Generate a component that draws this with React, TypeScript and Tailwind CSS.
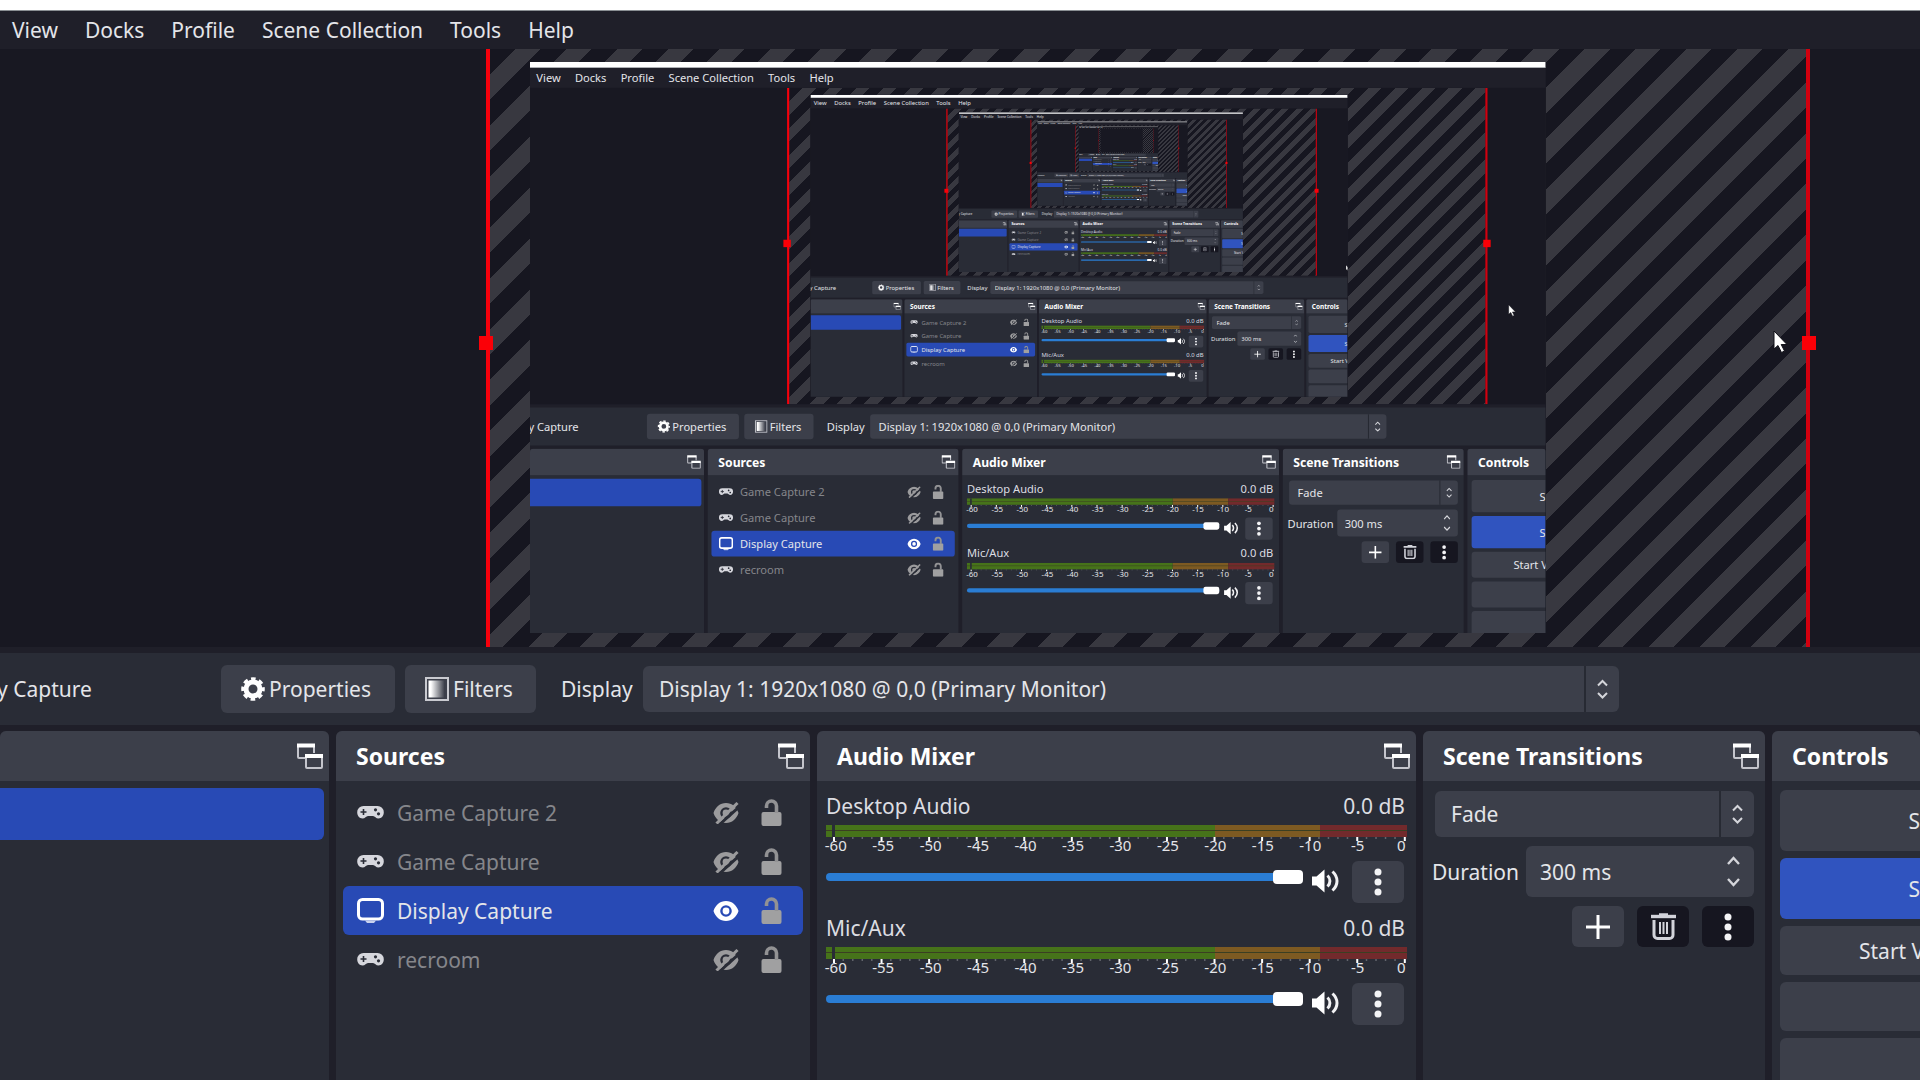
import React, { useId, useState } from "react";

const menuItems = ["View", "Docks", "Profile", "Scene Collection", "Tools", "Help"];

const sourceItems = [
  { name: "Game Capture 2", kind: "game", visible: false },
  { name: "Game Capture", kind: "game", visible: false },
  { name: "Display Capture", kind: "display", visible: true },
  { name: "recroom", kind: "game", visible: false },
];

const dbMarks = [-60, -55, -50, -45, -40, -35, -30, -25, -20, -15, -10, -5, 0];

// where the pointer was in each captured frame, newest first
const cursors = ["left-[1773px] top-[330px]", "left-[1849px] top-[458px]", "left-[1913px] top-[608px]"];

const maxDepth = 5;

const GearIcon = () => (
  <svg className="size-6 shrink-0" viewBox="0 0 24 24" fill="none" stroke="#fefefe">
    <circle cx="12" cy="12" r="7" strokeWidth="5" />
    <circle cx="12" cy="12" r="10.3" strokeWidth="3" strokeDasharray="4.6 3.49" strokeDashoffset="2.3" />
  </svg>
);

const FilterIcon = () => (
  <svg className="size-6 shrink-0" viewBox="0 0 24 24">
    <defs>
      <linearGradient id="fade">
        <stop offset="0.15" stopColor="#ffffff" />
        <stop offset="1" stopColor="#3c3f4a" />
      </linearGradient>
    </defs>
    <rect x="1" y="1" width="22" height="22" fill="none" stroke="#c9cad0" strokeWidth="2" />
    <rect x="3.5" y="3.5" width="16" height="17" fill="url(#fade)" />
  </svg>
);

const PopOutIcon = () => (
  <svg className="size-[26px]" viewBox="0 0 26 26" fill="none" stroke="#c4c5cc" strokeWidth="2">
    <path d="M8 15H2a1 1 0 0 1-1-1V3M17 3v7" />
    <path d="M0 2.500h18" stroke="#fff" strokeWidth="4" />
    <rect x="9" y="13" width="16" height="12" rx="1" />
    <path d="M8 13h18" stroke="#fff" strokeWidth="4" />
  </svg>
);

const GamepadIcon = () => (
  <svg className="h-[26px] w-[27px]" viewBox="0 0 27 26" fill="#d6d7dd">
    <path d="M6.500 6h14a6.300 6.300 0 0 1 6.300 6.300c0 3.600-2.300 6.200-5.300 6.200-2.600 0-3.600-2.600-5.500-2.600h-5c-1.900 0-2.900 2.600-5.500 2.600-3 0-5.300-2.600-5.300-6.200A6.300 6.300 0 0 1 6.500 6z" />
    <path d="M6.500 9v6M3.500 12h6" stroke="#292c36" strokeWidth="1.600" />
    <circle cx="18.500" cy="9.800" r="1.600" fill="#292c36" />
    <circle cx="21.500" cy="13.800" r="1.600" fill="#292c36" />
  </svg>
);

const DisplayIcon = () => (
  <svg className="h-[26px] w-[27px]" viewBox="0 0 27 26" fill="none" stroke="#fff">
    <rect x="1.5" y="1.5" width="24" height="19.500" rx="4" strokeWidth="3" />
    <path d="M8 22.500h11l-2 2.500h-7z" fill="#c9d2ee" stroke="none" />
  </svg>
);

const EyeIcon = ({ open }) => (
  <svg className="h-[22px] w-[26px]" viewBox="0 0 26 22">
    <path
      fillRule="evenodd"
      fill={open ? "#fff" : "#9b9b9d"}
      d="M13 1c6 0 10.500 4 12.500 10-2 6-6.500 10-12.500 10S2.500 17 .5 11C2.500 5 7 1 13 1zm0 4.200a5.800 5.800 0 1 0 0 11.600 5.800 5.800 0 0 0 0-11.600z"
    />
    <circle cx="13" cy="11" r="3.400" fill={open ? "#fff" : "#9b9b9d"} />
    {!open && (
      <>
        <path d="M7 22L27 4" stroke="#292c36" strokeWidth="3" />
        <path d="M3.500 21.500L24.500 1" stroke="#9b9b9d" strokeWidth="3" />
      </>
    )}
  </svg>
);

const UnlockIcon = () => (
  <svg className="h-[27px] w-[21px]" viewBox="0 0 21 27">
    <rect x="0.500" y="13" width="20" height="14" rx="2" fill="#a0a0a1" />
    <path d="M5.500 9V7a5 5 0 0 1 10 0v7" fill="none" stroke="#929294" strokeWidth="3.600" />
  </svg>
);

const SpeakerIcon = () => (
  <svg className="h-6 w-[27px]" viewBox="0 0 27 24" fill="none" stroke="#f2f2f4" strokeWidth="3">
    <path d="M0 7.500h4.500L12.500.5v23l-8-7H0z" fill="#fff" stroke="none" />
    <path d="M15.500 6.500c3.200 3 3.200 8 0 11M20.500 2.500c6 5.500 6 13.500 0 19" />
  </svg>
);

const DotsIcon = () => (
  <svg className="h-7 w-2" viewBox="0 0 8 28" fill="#f4f4f6">
    <circle cx="4" cy="4" r="3.500" />
    <circle cx="4" cy="14" r="3.500" />
    <circle cx="4" cy="24" r="3.500" />
  </svg>
);

const PlusIcon = () => (
  <svg className="size-6" viewBox="0 0 24 24" stroke="#fff" strokeWidth="3">
    <path d="M12 0v24M0 12h24" />
  </svg>
);

const TrashIcon = () => (
  <svg className="h-[27px] w-[25px]" viewBox="0 0 25 27" fill="none" stroke="#d2d3da">
    <path d="M0 3.500h25" strokeWidth="3.400" />
    <path d="M8 1.500h9" strokeWidth="2.500" />
    <path d="M3 7v15a3.500 3.500 0 0 0 3.500 3.500h12A3.500 3.500 0 0 0 22 22V7" strokeWidth="3" />
    <path d="M9 9v12M12.500 9v12M16 9v12" strokeWidth="2" />
  </svg>
);

const UpDownIcon = ({ wide = false }) => (
  <svg
    className={wide ? "h-[31px] w-[13px]" : "h-5 w-[11px]"}
    viewBox={wide ? "0 0 13 31" : "0 0 11 20"}
    fill="none"
    stroke="#d4d5da"
    strokeWidth="2"
  >
    {wide ? (
      <path d="M1 8l5.500-6L12 8M1 23l5.500 6L12 23" strokeWidth="2.400" />
    ) : (
      <path d="M1 6.500L5.500 2 10 6.500M1 14l4.500 4.500L10 14" />
    )}
  </svg>
);

const Combo = ({ id, value, className, label = undefined }) => (
  <div className={"relative h-[46px] " + className}>
    <select
      id={id}
      aria-label={label}
      className="h-full w-full appearance-none rounded-md bg-[#3c3f4a] px-4 text-[#e4e5e9] outline-none"
    >
      <option>{value}</option>
    </select>
    <div className="pointer-events-none absolute inset-y-0 right-0 flex w-[35px] items-center justify-center border-l-2 border-[#272a33]">
      <UpDownIcon />
    </div>
  </div>
);

const Dock = ({ title, className, popOut = true, children }) => (
  <section className={"flex flex-col overflow-hidden rounded-t-md bg-[#292c36] " + className}>
    <header className="flex h-[50px] shrink-0 items-center justify-between bg-[#3c3f4a] pr-[6px] pl-5">
      <h2 className="text-[23px] font-bold text-white">{title}</h2>
      {popOut && (
        <button aria-label="Undock">
          <PopOutIcon />
        </button>
      )}
    </header>
    {children}
  </section>
);

const Meter = () => (
  <div>
    <div className="relative flex h-3 w-full">
      <div className="w-2/3 grow bg-[#46731a]" />
      <div className="w-[18%] bg-[#7d5a22]" />
      <div className="w-[15%] bg-[#722a2c]" />
      <div className="absolute inset-x-0 top-[5px] h-px bg-[#3b3f22]" />
      <div className="absolute inset-y-0 left-[6px] w-[3px] bg-[#292c36]" />
    </div>
    <svg className="h-1 w-full" viewBox="0 0 582 4" preserveAspectRatio="none">
      {Array.from({ length: 61 }, (_, i) => (
        <rect
          key={i}
          x={7 + i * 9.53}
          y="0"
          width={i % 5 === 0 ? 2 : 1.5}
          height={i % 5 === 0 ? 4 : 2}
          fill={i % 5 === 0 ? "#fff" : "#62646c"}
        />
      ))}
    </svg>
    <div className="-mt-1 -mr-[22px] -ml-[14px] flex h-4 justify-between text-[15px] leading-4 text-[#e4e5e9]">
      {dbMarks.map((db) => (
        <span key={db} className={db === 0 ? "w-12 pr-2 text-center" : "w-12 text-center"}>
          {db}
        </span>
      ))}
    </div>
  </div>
);

const Channel = ({ name }) => {
  const [volume, setVolume] = useState(100);
  const id = useId();

  return (
    <div className="h-[122px]">
      <div className="flex h-[30px] items-center justify-between pr-[2px] text-[#dcdde2]">
        <label htmlFor={id}>{name}</label>
        <span>0.0 dB</span>
      </div>
      <div className="pt-1">
        <Meter />
      </div>
      <div className="flex items-start pt-2 pr-[3px]">
        <input
          id={id}
          type="range"
          value={volume}
          onChange={(e) => setVolume(Number(e.target.value))}
          className="mt-3 h-2 min-w-0 flex-1 appearance-none rounded-full bg-[#2a7dd4] outline-none [&::-webkit-slider-thumb]:h-[14px] [&::-webkit-slider-thumb]:w-[30px] [&::-webkit-slider-thumb]:appearance-none [&::-webkit-slider-thumb]:rounded [&::-webkit-slider-thumb]:bg-white"
        />
        <button className="mt-2 ml-[9px]" aria-label={"Mute " + name}>
          <SpeakerIcon />
        </button>
        <button
          className="ml-[13px] flex h-[42px] w-[52px] items-center justify-center rounded-md bg-[#3c3f4a]"
          aria-label={name + " options"}
        >
          <DotsIcon />
        </button>
      </div>
    </div>
  );
};

const Preview = ({ depth }) => (
  <main className="relative h-[598px] shrink-0 overflow-hidden bg-[#181822]">
    <div className="relative mr-[110px] ml-[486px] h-full border-r-4 border-l-4 border-r-[#d2000f] border-l-[#f6000c] bg-[repeating-linear-gradient(135deg,#161620_0px,#161620_18px,#383840_18px,#383840_36px)]">
      {/* the captured display, which shows this same window again */}
      <div className="absolute top-[13px] left-10 h-[571px] w-[1016px] overflow-hidden bg-[#181822]" aria-hidden="true" inert>
        {depth < maxDepth && (
          <div className="h-[1080px] w-[1920px] origin-top-left scale-[0.529]">
            <Studio depth={depth + 1} />
          </div>
        )}
      </div>
      <div className="absolute top-[287px] -left-[11px] h-[14px] w-[14px] bg-[#fb0007]" />
      <div className="absolute top-[287px] -right-[10px] h-[14px] w-[14px] bg-[#fb0007]" />
    </div>
  </main>
);

const Studio = ({ depth }) => {
  const [duration, setDuration] = useState("300 ms");
  const displayId = useId();
  const durationId = useId();

  return (
    <div className="relative flex h-full flex-col overflow-hidden bg-[#1f1f29] font-['Noto_Sans','Open_Sans',sans-serif] text-[21px] leading-[30px] text-[#e4e5e9]">
      <div className="h-[11px] shrink-0 border-b border-[#8a8f93] bg-white" />
      <nav className="flex h-[38px] shrink-0 items-center gap-[27px] px-3">
        {menuItems.map((item) => (
          <button key={item} className="whitespace-nowrap">
            {item}
          </button>
        ))}
      </nav>

      <Preview depth={depth} />

      <div className="my-[6px] flex h-[72px] shrink-0 items-center bg-[#292c36] pr-[301px]">
        <span className="-ml-[3px] w-56 whitespace-nowrap">y Capture</span>
        <button className="flex h-12 w-[174px] items-center gap-1 rounded-md bg-[#3c3f4a] pl-5">
          <GearIcon />
          Properties
        </button>
        <button className="ml-[10px] flex h-12 w-[131px] items-center gap-1 rounded-md bg-[#3c3f4a] pl-5">
          <FilterIcon />
          Filters
        </button>
        <label htmlFor={displayId} className="ml-[25px] w-[82px]">
          Display
        </label>
        <Combo id={displayId} value="Display 1: 1920x1080 @ 0,0 (Primary Monitor)" className="flex-1" />
      </div>

      <div className="flex min-h-0 flex-1 gap-[7px]">
        <Dock title="" className="w-[329px] shrink-0">
          <ul className="pt-[7px] pr-[5px]">
            <li className="h-[52px] rounded-r-md bg-[#284ab5]" />
          </ul>
        </Dock>

        <Dock title="Sources" className="w-[474px] shrink-0">
          <ul className="px-[7px] pt-[7px]">
            {sourceItems.map((source) => (
              <li
                key={source.name}
                className={
                  source.visible
                    ? "flex h-[49px] items-center rounded-md bg-[#284ab5] pr-[21px] pl-[14px]"
                    : "flex h-[49px] items-center pr-[21px] pl-[14px] text-[#85868b]"
                }
              >
                {source.kind === "display" ? <DisplayIcon /> : <GamepadIcon />}
                <span className="ml-[13px] flex-1">{source.name}</span>
                <button aria-label={"Toggle " + source.name}>
                  <EyeIcon open={source.visible} />
                </button>
                <button className="ml-[22px]" aria-label={"Lock " + source.name}>
                  <UnlockIcon />
                </button>
              </li>
            ))}
          </ul>
        </Dock>

        <Dock title="Audio Mixer" className="min-w-0 flex-1">
          <div className="pt-[10px] pr-[9px] pl-[9px]">
            <Channel name="Desktop Audio" />
            <Channel name="Mic/Aux" />
          </div>
        </Dock>

        <Dock title="Scene Transitions" className="w-[342px] shrink-0">
          <div className="flex flex-col gap-[9px] pt-[10px] pr-[11px] pl-[9px]">
            <Combo id={undefined} label="Transition" value="Fade" className="ml-[3px]" />
            <div className="flex items-center">
              <label htmlFor={durationId} className="w-[94px]">
                Duration
              </label>
              <div className="relative h-[51px] flex-1">
                <input
                  id={durationId}
                  type="text"
                  value={duration}
                  onChange={(e) => setDuration(e.target.value)}
                  className="h-full w-full rounded-md bg-[#3c3f4a] px-[14px] outline-none"
                />
                <div className="pointer-events-none absolute inset-y-0 right-[14px] flex items-center">
                  <UpDownIcon wide />
                </div>
              </div>
            </div>
            <div className="flex justify-end gap-[13px]">
              <button className="flex h-[41px] w-[52px] items-center justify-center rounded-md bg-[#3c3f4a]" aria-label="Add transition">
                <PlusIcon />
              </button>
              <button className="flex h-[41px] w-[52px] items-center justify-center rounded-md bg-[#161620]" aria-label="Remove transition">
                <TrashIcon />
              </button>
              <button className="flex h-[41px] w-[52px] items-center justify-center rounded-md bg-[#161620]" aria-label="Transition options">
                <DotsIcon />
              </button>
            </div>
          </div>
        </Dock>

        <Dock title="Controls" className="w-[148px] shrink-0" popOut={false}>
          <div className="flex flex-col gap-[7px] pt-[9px] pl-2 whitespace-nowrap">
            <button className="h-[61px] shrink-0 rounded-l-md bg-[#3c3f4a] text-right">S</button>
            <button className="h-[61px] shrink-0 rounded-l-md bg-[#3054bf] text-right">S</button>
            <button className="h-[49px] shrink-0 rounded-l-md bg-[#3c3f4a] pl-[79px] text-left">Start V</button>
            <button className="h-[49px] shrink-0 rounded-l-md bg-[#3c3f4a]" aria-label="Mode" />
            <button className="h-[49px] shrink-0 rounded-l-md bg-[#3c3f4a]" aria-label="Settings" />
          </div>
        </Dock>
      </div>

      {cursors[depth] && (
        <svg className={"absolute h-6 w-4 " + cursors[depth]} viewBox="0 0 16 24">
          <path d="M1 1v18l4-3.500 3.500 7 3-1.500-3.300-6.500H14z" fill="#fff" stroke="#111118" strokeWidth="1" />
        </svg>
      )}
    </div>
  );
};

const App = () => {
  return (
    <div className="h-screen w-full">
      <Studio depth={0} />
    </div>
  );
};

export default App;
